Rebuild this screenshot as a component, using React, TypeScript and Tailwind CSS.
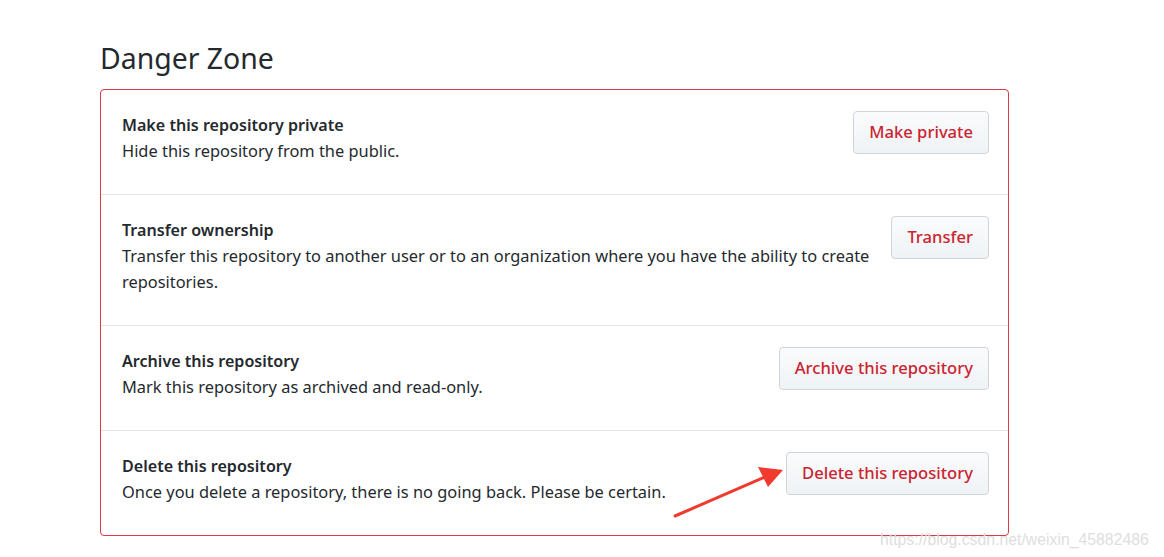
import React from 'react';

// Types
interface DangerItem {
  title: string;
  description: string;
  action: string;
}

// Constants
const DANGER_ITEMS: DangerItem[] = [
  {
    title: 'Make this repository private',
    description: 'Hide this repository from the public.',
    action: 'Make private',
  },
  {
    title: 'Transfer ownership',
    description:
      'Transfer this repository to another user or to an organization where you have the ability to create repositories.',
    action: 'Transfer',
  },
  {
    title: 'Archive this repository',
    description: 'Mark this repository as archived and read-only.',
    action: 'Archive this repository',
  },
  {
    title: 'Delete this repository',
    description: 'Once you delete a repository, there is no going back. Please be certain.',
    action: 'Delete this repository',
  },
];

const FONT = "font-['Segoe_UI','Noto_Sans',sans-serif]";

// Components
const DangerRow: React.FC<{ item: DangerItem; last: boolean }> = ({ item, last }) => (
  <div
    className={`flex items-start justify-between gap-4 pl-[21px] pr-[19px] pt-[22px] pb-[30px] ${
      last ? '' : 'border-b border-[#e1e4e8]'
    }`}
  >
    <div className="text-[16.4px] leading-[26px] text-[#24292e]">
      <div className="font-semibold text-[16.1px]">{item.title}</div>
      <div>{item.description}</div>
    </div>
    <button className="shrink-0 -mt-[1px] h-[43px] px-[15px] rounded-[4px] border border-[#d1d5da] bg-gradient-to-b from-[#fafbfc] to-[#eff3f6] text-[16.6px] font-medium text-[#cb2431]">
      {item.action}
    </button>
  </div>
);

export default function App() {
  return (
    <div className={`relative w-[1164px] h-[557px] bg-white overflow-hidden ${FONT}`}>
      <div className="pl-[100px] pt-[38px] w-[1009px]">
        <h2 className="text-[28.4px] leading-[40px] font-normal text-[#24292e] pb-[11px]">Danger Zone</h2>
        <div className="rounded-[4px] border border-[#d73a49]">
          {DANGER_ITEMS.map((item, i) => (
            <DangerRow key={item.title} item={item} last={i === DANGER_ITEMS.length - 1} />
          ))}
        </div>
      </div>

      {/* annotation arrow */}
      <svg className="absolute left-0 top-0" width="1164" height="557">
        <line x1="675" y1="516" x2="765" y2="477" stroke="#f03a2e" strokeWidth="3" strokeLinecap="round" />
        <polygon points="783,470 758,467 768,487" fill="#f03a2e" />
      </svg>

      {/* watermark */}
      <div className="absolute left-[880px] top-[528px] text-[15.8px] text-[#dedede] font-['Liberation_Sans',sans-serif]">
        https://blog.csdn.net/weixin_45882486
      </div>
    </div>
  );
}
